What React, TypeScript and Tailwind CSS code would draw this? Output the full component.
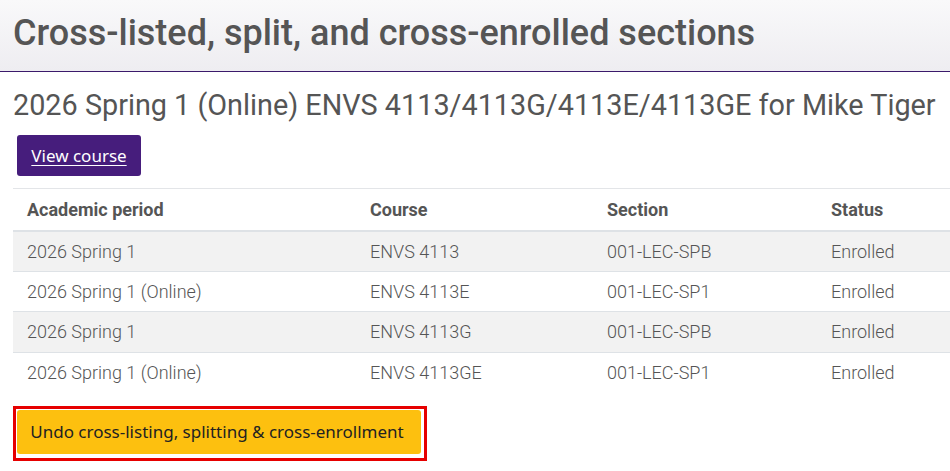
import React from "react";

const rows = [
  ["2026 Spring 1", "ENVS 4113", "001-LEC-SPB", "Enrolled"],
  ["2026 Spring 1 (Online)", "ENVS 4113E", "001-LEC-SP1", "Enrolled"],
  ["2026 Spring 1", "ENVS 4113G", "001-LEC-SPB", "Enrolled"],
  ["2026 Spring 1 (Online)", "ENVS 4113GE", "001-LEC-SP1", "Enrolled"],
];

export default function App() {
  return (
    <div className="w-[950px] h-[471px] overflow-hidden bg-white text-[#555] [font-family:Roboto,'Liberation_Sans',sans-serif]">
      <div className="h-[72px] flex items-center px-[13px] bg-gradient-to-b from-[#f9f9fa] to-[#eeedf1] border-b border-[#3b1a6b]">
        <h1 className="text-[36px] font-medium leading-none text-[#555] -mt-[6px]">
          Cross-listed, split, and cross-enrolled sections
        </h1>
      </div>
      <div className="pl-[13px]">
        <h2 className="mt-[16px] text-[28.8px] leading-[34px] font-normal text-[#555] whitespace-nowrap">
          2026 Spring 1 (Online) ENVS 4113/4113G/4113E/4113GE for Mike Tiger
        </h2>
        <div className="mt-[13px] ml-[4px]">
          <button className="h-[41px] w-[124px] rounded-[3px] bg-[#461d7c] text-white text-[17px] underline underline-offset-[3px] [font-family:'Noto_Sans',sans-serif]">
            View course
          </button>
        </div>
        <table className="mt-[12px] w-[937px] border-collapse text-[18px]">
          <thead>
            <tr className="h-[42px] border-t border-[#e3e5e8] border-b-2 border-b-[#dee2e6]">
              <th className="w-[343px] pl-[14px] text-left font-bold">Academic period</th>
              <th className="w-[237px] pl-[14px] text-left font-bold">Course</th>
              <th className="w-[224px] pl-[14px] text-left font-bold">Section</th>
              <th className="pl-[14px] text-left font-bold">Status</th>
            </tr>
          </thead>
          <tbody className="font-light">
            {rows.map((r, i) => (
              <tr
                key={i}
                className={
                  "h-[40.5px] border-t border-[#dee2e6] " + (i % 2 === 0 ? "bg-[#f2f2f2]" : "bg-white")
                }
              >
                {r.map((c, j) => (
                  <td key={j} className="pl-[14px]">
                    {c}
                  </td>
                ))}
              </tr>
            ))}
          </tbody>
        </table>
        <div className="mt-[13px] inline-block border-[3px] border-[#e60000] pt-[1px] pl-[1px] pr-[3px] pb-[4px]">
          <button className="block h-[44px] w-[404px] rounded-[3px] bg-[#fdc00f] text-[#222] text-[17px] pr-[4px] [font-family:'Noto_Sans',sans-serif]">
            Undo cross-listing, splitting &amp; cross-enrollment
          </button>
        </div>
      </div>
    </div>
  );
}
